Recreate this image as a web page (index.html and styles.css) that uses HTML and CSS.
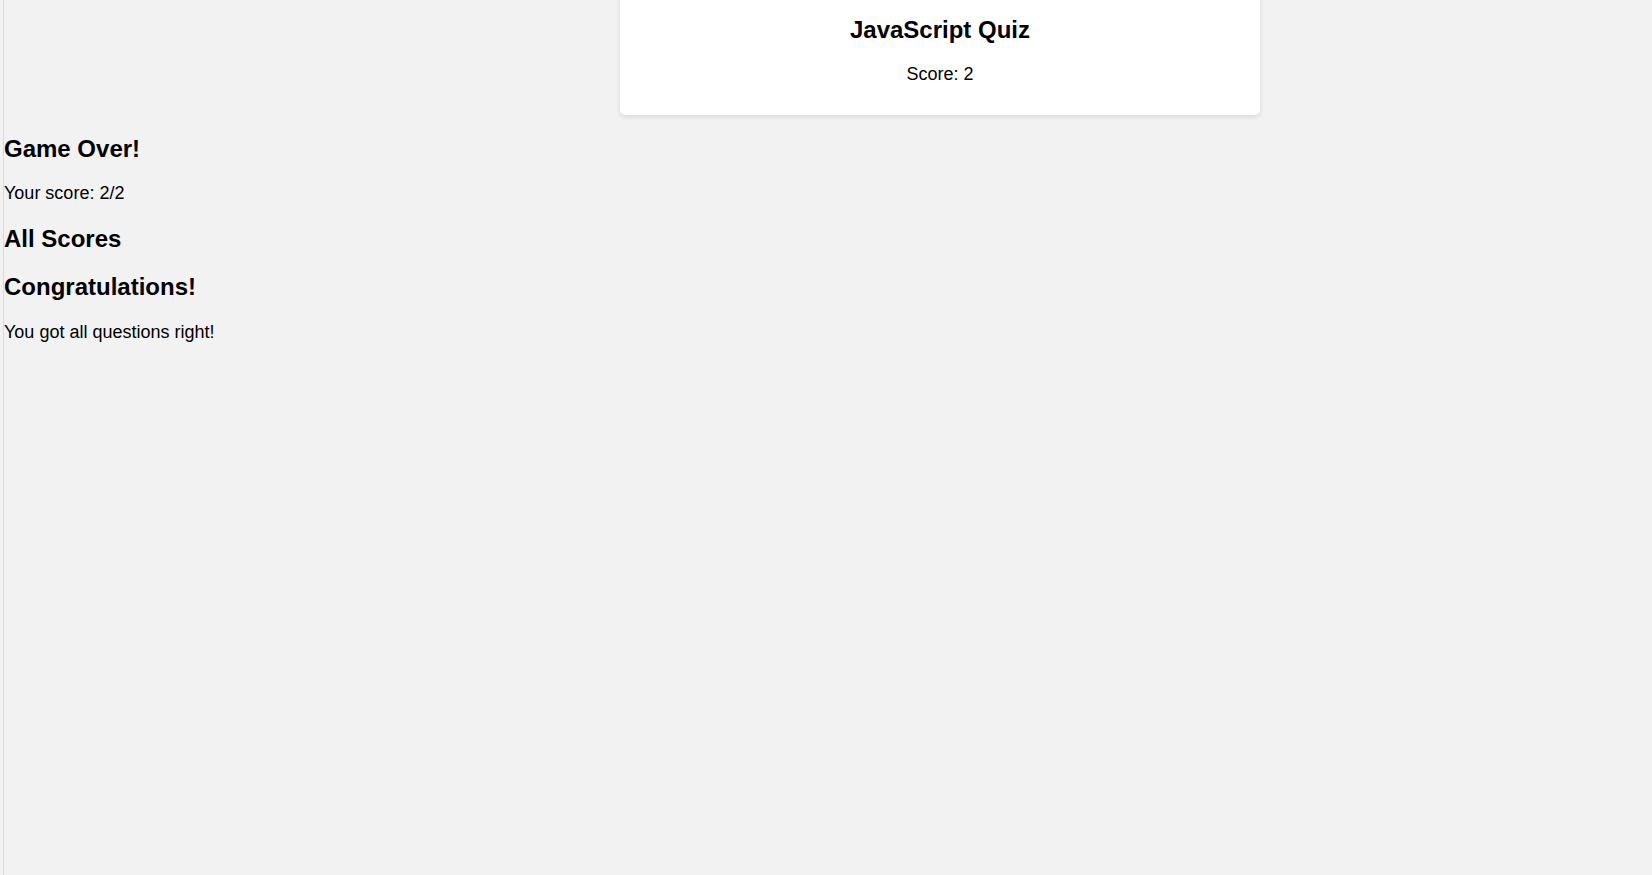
FILE: index.html
```html
<!DOCTYPE html>
<html>
<head>
<meta charset="utf-8">
<title>JavaScript Quiz</title>
<link rel="stylesheet" href="styles.css">
</head>
<body>
<div class="page">
  <div class="card">
    <h2 class="card-title">JavaScript Quiz</h2>
    <p class="card-score">Score: 2</p>
  </div>
  <div class="results">
    <h2 class="heading">Game Over!</h2>
    <p class="text">Your score: 2/2</p>
    <h2 class="heading">All Scores</h2>
    <h2 class="heading">Congratulations!</h2>
    <p class="text">You got all questions right!</p>
  </div>
</div>
</body>
</html>
```

FILE: styles.css
```css
html, body {
  margin: 0;
  padding: 0;
  background: #f2f2f2;
  overflow: hidden;
}
body {
  font-family: "Liberation Sans", Arial, sans-serif;
  color: #000;
}
.page {
  margin-left: 3px;
  border-left: 1px solid #dadada;
  height: 875px;
  display: flow-root;
}
.card {
  box-sizing: border-box;
  width: 640px;
  margin: -16px 0 0 616px;
  padding: 12px 20px;
  background: #fff;
  border-radius: 5px;
  box-shadow: 0 2px 5px rgba(0, 0, 0, 0.1);
  text-align: center;
}
.card-title {
  font-size: 24px;
  font-weight: bold;
  margin: 19.92px 0;
  line-height: normal;
}
.card-score {
  font-size: 18px;
  margin: 18px 0;
  line-height: normal;
}
.results {
  display: flow-root;
}
.heading {
  font-size: 24px;
  font-weight: bold;
  margin: 20.5px 0;
  line-height: normal;
}
.heading:first-child {
  margin-top: 19.92px;
}
.text {
  font-size: 18px;
  margin: 20.5px 0;
  line-height: normal;
}
```
